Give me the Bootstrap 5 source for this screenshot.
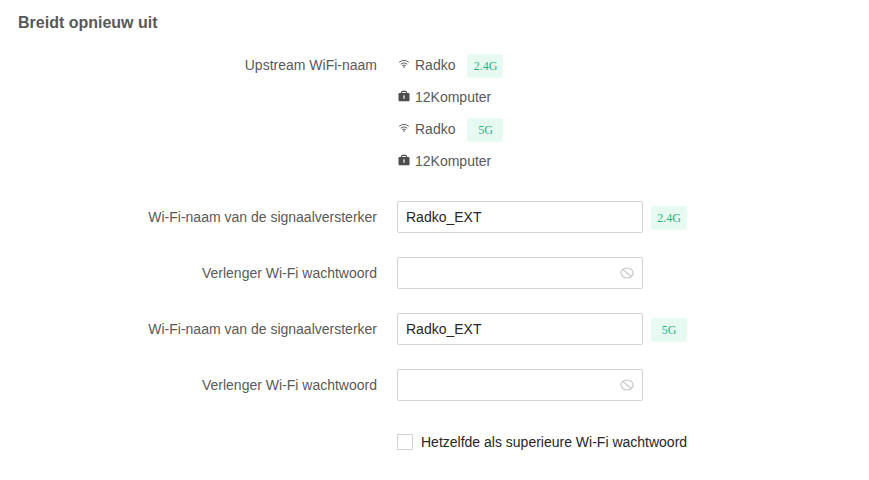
<!DOCTYPE html>
<html lang="nl">
<head>
<meta charset="utf-8">
<meta name="viewport" content="width=device-width, initial-scale=1">
<title>Breidt opnieuw uit</title>
<link href="https://cdn.jsdelivr.net/npm/bootstrap@5.3.0/dist/css/bootstrap.min.css" rel="stylesheet">
<style>
body { font-family: "Liberation Sans", Arial, sans-serif; font-size: 14px; line-height: 32px; color: #595959; background: #fff; }
.page-title { font-size: 16px; line-height: 24px; padding: 11px 0 14px 18px; }
.setup-form { gap: 24px; }
.field-label { width: 377px; margin-right: 20px; }
.wifi-line { height: 32px; }
.line-icon { width: 12px; height: 12px; margin: 0 5px 2px 1px; }
.band-tag { width: 36px; height: 24px; margin-top: 2px; border-radius: 3px; font: 12px/24px "Liberation Serif", "Times New Roman", serif; color: #24b47e; background: #e6faf2; }
.band-tag span { display: block; transform: scaleY(1.12); }
.wifi-line .band-tag { margin-left: 12px; }
.field-box { width: 246px; }
.field-box .form-control { height: 32px; padding: 0 8px; font-size: 14px; line-height: 30px; color: #262626; border: 1px solid #d4d4d4; border-radius: 2px; }
.hide-icon { right: 9px; top: 10px; width: 14px; height: 12px; }
.same-pass { height: 34px; color: #262626; }
.same-pass .form-check-input { width: 16px; height: 16px; border: 1px solid #d4d4d4; border-radius: 0; }
</style>
<script src="https://cdn.jsdelivr.net/npm/bootstrap@5.3.0/dist/js/bootstrap.bundle.min.js"></script>
</head>
<body>
<svg class="d-none" xmlns="http://www.w3.org/2000/svg">
  <symbol id="wifi" viewBox="0 0 12 12"><g fill="none" stroke="#666" stroke-width="1"><path d="M1.1 4.3Q6 .5 10.9 4.3"/><path d="M2.7 6.1Q6 3.5 9.3 6.1"/><path d="M4.2 7.7Q6 6.3 7.8 7.7"/></g><circle cx="6" cy="8.9" r=".8" fill="#666"/></symbol>
  <symbol id="lock" viewBox="0 0 12 12"><path d="M3.5 4V2.6Q3.5 1.3 4.8 1.3H7.2Q8.5 1.3 8.5 2.6V4" fill="none" stroke="#4d4d4d" stroke-width="1.2"/><rect x=".5" y="3" width="11" height="8.2" rx=".9" fill="#4d4d4d"/><path d="M6 5.2V8.7" stroke="#fff" stroke-width="1.2"/></symbol>
  <symbol id="hidden" viewBox="0 0 14 12"><g fill="none" stroke="#cbcbcb" stroke-width="1.3"><ellipse cx="7" cy="6" rx="6.1" ry="4.8"/><path d="M2.8 2.5L11.2 9.5"/></g></symbol>
</svg>
<main>
  <h1 class="page-title fw-bold m-0">Breidt opnieuw uit</h1>
  <form class="setup-form d-flex flex-column">
    <div class="d-flex">
      <div class="field-label text-end">Upstream WiFi-naam</div>
      <div>
        <div class="wifi-line d-flex align-items-center"><svg class="line-icon"><use href="#wifi"/></svg><span>Radko</span><span class="band-tag text-center"><span>2.4G</span></span></div>
        <div class="wifi-line d-flex align-items-center"><svg class="line-icon"><use href="#lock"/></svg><span>12Komputer</span></div>
        <div class="wifi-line d-flex align-items-center"><svg class="line-icon"><use href="#wifi"/></svg><span>Radko</span><span class="band-tag text-center"><span>5G</span></span></div>
        <div class="wifi-line d-flex align-items-center"><svg class="line-icon"><use href="#lock"/></svg><span>12Komputer</span></div>
      </div>
    </div>
    <div class="d-flex align-items-center">
      <label class="field-label text-end" for="name24">Wi-Fi-naam van de signaalversterker</label>
      <div class="field-box"><input id="name24" class="form-control" value="Radko_EXT"></div>
      <span class="band-tag text-center ms-2"><span>2.4G</span></span>
    </div>
    <div class="d-flex align-items-center">
      <label class="field-label text-end" for="pass24">Verlenger Wi-Fi wachtwoord</label>
      <div class="field-box position-relative"><input id="pass24" type="password" class="form-control"><svg class="hide-icon position-absolute"><use href="#hidden"/></svg></div>
    </div>
    <div class="d-flex align-items-center">
      <label class="field-label text-end" for="name5">Wi-Fi-naam van de signaalversterker</label>
      <div class="field-box"><input id="name5" class="form-control" value="Radko_EXT"></div>
      <span class="band-tag text-center ms-2"><span>5G</span></span>
    </div>
    <div class="d-flex align-items-center">
      <label class="field-label text-end" for="pass5">Verlenger Wi-Fi wachtwoord</label>
      <div class="field-box position-relative"><input id="pass5" type="password" class="form-control"><svg class="hide-icon position-absolute"><use href="#hidden"/></svg></div>
    </div>
    <div class="d-flex">
      <div class="field-label"></div>
      <div class="same-pass d-flex align-items-center gap-2"><input id="same" type="checkbox" class="form-check-input m-0"><label for="same">Hetzelfde als superieure Wi-Fi wachtwoord</label></div>
    </div>
  </form>
</main>
</body>
</html>
